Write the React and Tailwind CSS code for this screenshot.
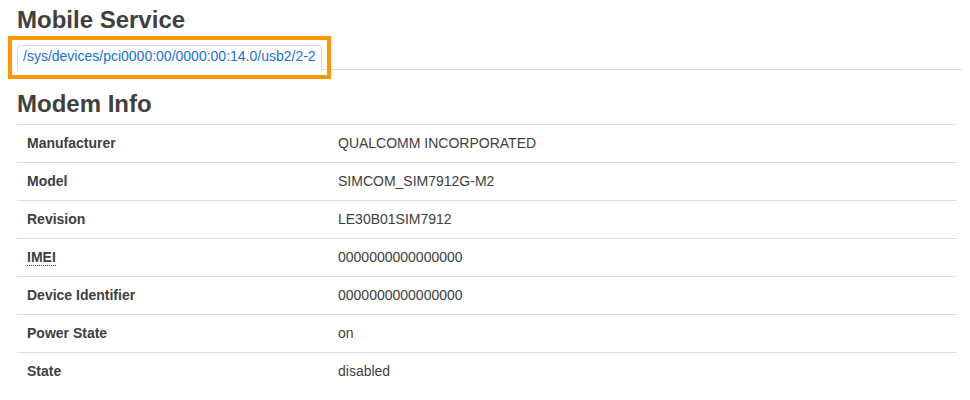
import React from "react";

const rows = [
  ["Manufacturer", "QUALCOMM INCORPORATED"],
  ["Model", "SIMCOM_SIM7912G-M2"],
  ["Revision", "LE30B01SIM7912"],
  ["IMEI", "0000000000000000", true],
  ["Device Identifier", "0000000000000000"],
  ["Power State", "on"],
  ["State", "disabled"],
];

export default function App() {
  return (
    <div
      className="relative w-[970px] h-[400px] bg-white text-[#404040] pl-[17px] pr-[8px]"
      style={{ fontFamily: '"Liberation Sans", Arial, sans-serif' }}
    >
      <h2 className="text-[24px] leading-[36px] font-bold m-0 pt-[2px]">Mobile Service</h2>
      <ul className="flex mt-[7px] border-b border-[#ddd] list-none p-0">
        <li className="-mb-px border border-[#ddd] border-b-white bg-white rounded-t-[4px] px-[5px] pt-[1px] pb-[4px] text-[14px] leading-[18px] text-[#1a6fd4]">
          /sys/devices/pci0000:00/0000:00:14.0/usb2/2-2
        </li>
      </ul>
      <h2 className="text-[24px] leading-[36px] font-bold mt-[16px] m-0">Modem Info</h2>
      <div className="mt-[2px] w-[940px] text-[14px] leading-[18px]">
        {rows.map(([k, v, abbr]) => (
          <div key={k} className="flex border-t border-[#ddd]">
            <div className="w-[311px] pl-[10px] pt-[9px] pb-[10px] font-bold">
              {abbr ? (
                <span className="border-b border-dotted border-[#404040]">{k}</span>
              ) : (
                k
              )}
            </div>
            <div className="pl-[10px] pt-[9px] pb-[10px]">{v}</div>
          </div>
        ))}
      </div>
      <div className="absolute left-[8px] top-[36px] w-[323px] h-[43px] border-4 border-[#ff9800] pointer-events-none" />
    </div>
  );
}
